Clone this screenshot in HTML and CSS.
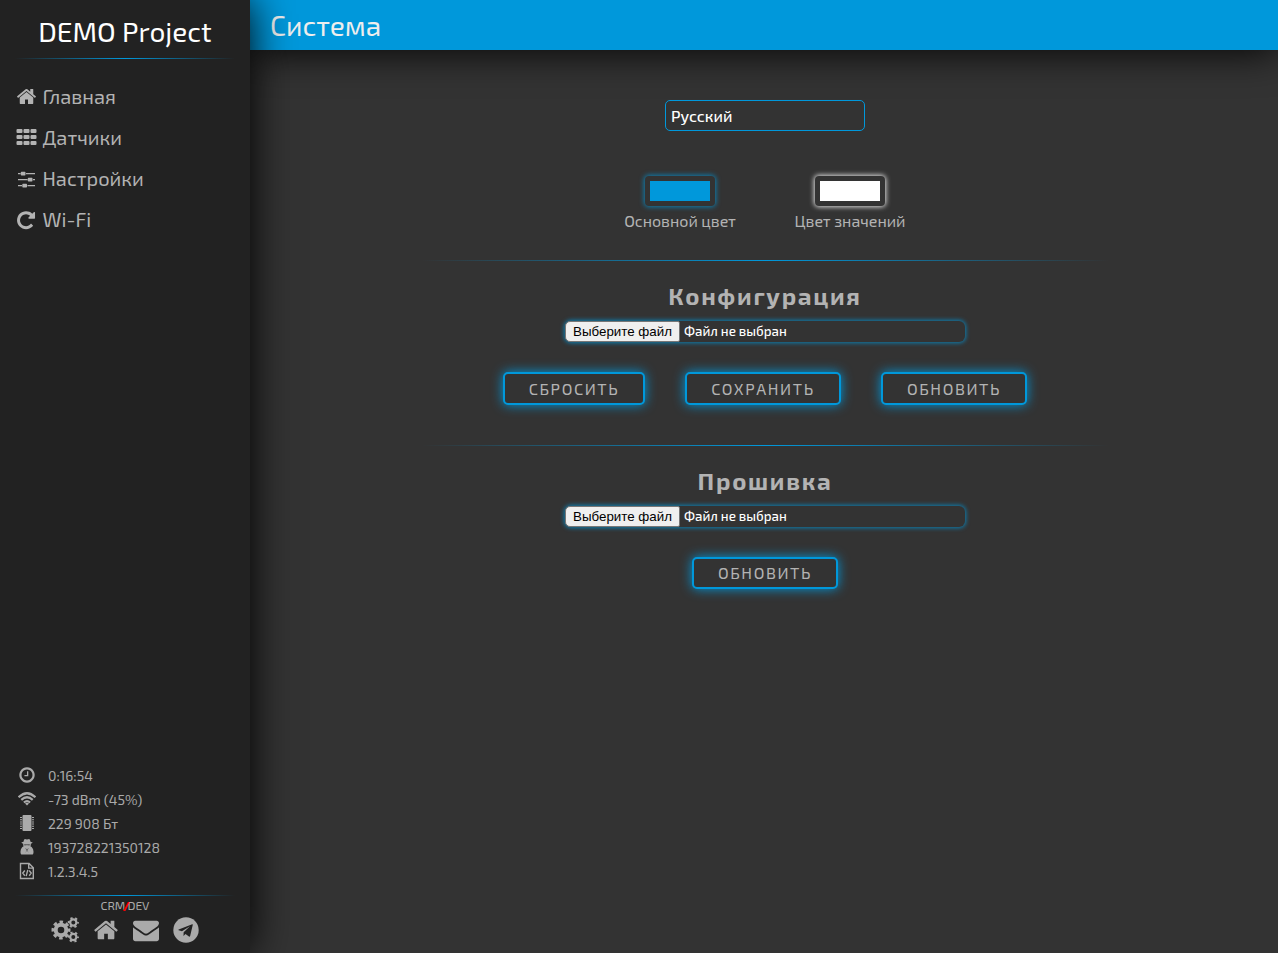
FILE: index.html
```html
<!DOCTYPE html>
<html lang="ru">
<head>
<meta charset="utf-8">
<title>DEMO Project</title>
<link rel="stylesheet" href="styles.css">
</head>
<body>
<svg class="defs" width="0" height="0">
  <symbol id="home" viewBox="0 0 1792 1792"><path d="M1472 992v480q0 26-19 45t-45 19h-384v-384h-256v384h-384q-26 0-45-19t-19-45v-480q0-1 .5-3t.5-3l575-474 575 474q1 2 1 6zm223-69l-62 74q-8 9-21 11h-3q-13 0-21-7l-692-577-692 577q-12 8-24 7-13-2-21-11l-62-74q-8-10-7-23.5t11-21.5l719-599q32-26 76-26t76 26l244 204v-195q0-14 9-23t23-9h192q14 0 23 9t9 23v408l219 182q10 8 11 21.5t-7 23.5z"/></symbol>
</svg>
<div class="app">
  <aside class="sidebar">
    <h1 class="brand">DEMO Project</h1>
    <div class="rule"></div>
    <nav class="nav">
      <a class="nav-item"><svg class="nav-icon" viewBox="0 0 1792 1792"><use href="#home"/></svg><span>Главная</span></a>
      <a class="nav-item"><svg class="nav-icon" viewBox="0 0 21 21"><path d="M1.500 2h4q1 0 1 1v2q0 1-1 1h-4q-1 0-1-1v-2q0-1 1-1zM8.500 2h4q1 0 1 1v2q0 1-1 1h-4q-1 0-1-1v-2q0-1 1-1zM15.500 2h4q1 0 1 1v2q0 1-1 1h-4q-1 0-1-1v-2q0-1 1-1zM1.500 8h4q1 0 1 1v2q0 1-1 1h-4q-1 0-1-1v-2q0-1 1-1zM8.500 8h4q1 0 1 1v2q0 1-1 1h-4q-1 0-1-1v-2q0-1 1-1zM15.500 8h4q1 0 1 1v2q0 1-1 1h-4q-1 0-1-1v-2q0-1 1-1zM1.500 14h4q1 0 1 1v2q0 1-1 1h-4q-1 0-1-1v-2q0-1 1-1zM8.500 14h4q1 0 1 1v2q0 1-1 1h-4q-1 0-1-1v-2q0-1 1-1zM15.500 14h4q1 0 1 1v2q0 1-1 1h-4q-1 0-1-1v-2q0-1 1-1z"/></svg><span>Датчики</span></a>
      <a class="nav-item"><svg class="nav-icon" viewBox="0 -1 21 21"><path d="M2 4h2.500v1.200H2zM10 4h9v1.200h-9zM2 10h9.500v1.200H2zM17 10h2v1.200h-2zM2 16h4v1.200H2zM11.500 16h7.500v1.200h-7.500zM5.500 2.700h3.300q.7 0 .7.700v2.400q0 .7-.7.700H5.500q-.7 0-.7-.7V3.400q0-.7.700-.7zM12.500 8.700h3.300q.7 0 .7.700v2.400q0 .7-.7.700h-3.300q-.7 0-.7-.7V9.400q0-.7.700-.7zM7 14.700h3.300q.7 0 .7.700v2.400q0 .7-.7.700H7q-.7 0-.7-.7v-2.400q0-.7.700-.7z"/></svg><span>Настройки</span></a>
      <a class="nav-item"><svg class="nav-icon" viewBox="40 -60 1792 1792"><path d="M1664 256v448q0 26-19 45t-45 19h-448q-42 0-59-40-17-39 14-69l138-138q-148-137-349-137-104 0-198.500 40.500t-163.500 109.500-109.500 163.500-40.500 198.500 40.500 198.500 109.500 163.500 163.500 109.500 198.500 40.500q119 0 225-52t179-147q7-10 23-12 15 0 25 9l137 138q9 8 9.500 20.500t-7.500 22.500q-109 132-264 204.500t-327 72.500q-156 0-298-61t-245-164-164-245-61-298 61-298 164-245 245-164 298-61q147 0 284.500 55.500t244.500 156.500l130-129q29-31 70-14 39 17 39 59z"/></svg><span>Wi-Fi</span></a>
    </nav>
    <div class="info">
      <div class="info-row"><svg class="info-icon" viewBox="0 0 1792 1792"><path d="M1024 544v448q0 14-9 23t-23 9h-320q-14 0-23-9t-9-23v-64q0-14 9-23t23-9h224v-352q0-14 9-23t23-9h64q14 0 23 9t9 23zm416 352q0-148-73-273t-198-198-273-73-273 73-198 198-73 273 73 273 198 198 273 73 273-73 198-198 73-273zm224 0q0 209-103 385.500t-279.500 279.500-385.500 103-385.500-103-279.500-279.500-103-385.500 103-385.500 279.500-279.500 385.500-103 385.500 103 279.500 279.500 103 385.500z"/></svg><span>0:16:54</span></div>
      <div class="info-row"><svg class="info-icon" viewBox="0 0 18 18"><g fill="none" stroke="currentColor" stroke-width="2.200"><path d="M.6 7.300Q9 -.8 17.400 7.300M3.300 9.900Q9 4.600 14.700 9.900M5.900 12.500Q9 9.800 12.100 12.500"/></g><path d="M7 13.400Q9 11.900 11 13.400L9 15.400z"/></svg><span>-73 dBm (45%)</span></div>
      <div class="info-row"><svg class="info-icon" viewBox="0 0 18 18"><path d="M5.500 1h7q1 0 1 1v14q0 1-1 1h-7q-1 0-1-1V2q0-1 1-1zM2 3h2v1H2zM2 5.200h2v1H2zM2 7.400h2v1H2zM2 9.600h2v1H2zM2 11.800h2v1H2zM2 14h2v1H2zM14 3h2v1h-2zM14 5.200h2v1h-2zM14 7.400h2v1h-2zM14 9.600h2v1h-2zM14 11.800h2v1h-2zM14 14h2v1h-2z"/></svg><span>229 908 Бт</span></div>
      <div class="info-row"><svg class="info-icon" viewBox="0 0 18 18"><path fill-rule="evenodd" d="M5.500 3.700Q5.900 1.300 6.900 1L9 1.500l2.100-.5q1 .3 1.400 2.700l2.200.8q-.6.900-1.900 1.200.2 1.600-.4 2.500 2.700 1.200 3.100 5.200.2 3.100-1.500 3.100H4q-1.700 0-1.500-3.100.4-4 3.100-5.200-.6-.9-.4-2.500Q3.900 5.400 3.300 4.500zM6.200 6.400v.8h2.200l.6-.4.6.4h2.200v-.8zM7.200 10.300l1 1.300-.4 3.500.8-3.300v-.9zM10.800 10.300l-1 1.300.4 3.500-.8-3.300v-.9z"/></svg><span>193728221350128</span></div>
      <div class="info-row"><svg class="info-icon" viewBox="0 0 18 18"><path d="M2.500 1.500h8.600l4.200 4.200v10.800H2.500zM10.700 1.500v4.600h4.600M6.800 8.500l-2 2.600 2 2.600M11.200 8.500l2 2.600-2 2.600M9.800 7.900l-1.600 6.300" fill="none" stroke="currentColor" stroke-width="1.400"/></svg><span>1.2.3.4.5</span></div>
    </div>
    <footer class="footer">
      <div class="rule"></div>
      <div class="credit"><span>CRM</span><b>/</b><span>DEV</span></div>
      <div class="links">
        <svg class="link-icon cogs" viewBox="0 0 28 28"><g fill="none" stroke="currentColor"><circle cx="10" cy="14" r="5.300" stroke-width="4"/><circle cx="10" cy="14" r="8" stroke-width="3" stroke-dasharray="3.500 2.783" stroke-dashoffset="1.750"/><g stroke-width="2.200"><circle cx="22.300" cy="6.500" r="3.100"/><circle cx="22.300" cy="21" r="3.100"/></g><g stroke-width="2.200" stroke-dasharray="2.100 2.612" stroke-dashoffset="1.050"><circle cx="22.300" cy="6.500" r="4.500"/><circle cx="22.300" cy="21" r="4.500"/></g></g></svg>
        <svg class="link-icon" viewBox="0 0 1792 1792"><use href="#home"/></svg>
        <svg class="link-icon mail" viewBox="0 0 1792 1792"><path d="M1792 710v794q0 66-47 113t-113 47h-1472q-66 0-113-47t-47-113v-794q44 49 101 87 362 246 497 345 57 42 92.500 65.500t94.500 48 110 24.500h2q51 0 110-24.500t94.500-48 92.500-65.500q170-123 498-345 57-39 100-87zm0-294q0 79-49 151t-122 123q-376 261-468 325-10 7-42.500 31t-54 38.500-52 32.500-57.500 27-50 9h-2q-23 0-50-9t-57.500-27-52-32.500-54-38.500-42.500-31q-91-64-262-182.500t-205-142.500q-62-42-117-115.500t-55-136.500q0-78 41.500-130t118.500-52h1472q65 0 112.500 47t47.500 113z"/></svg>
        <svg class="link-icon telegram" viewBox="0 0 26 26"><circle cx="13" cy="13" r="12.700"/><path class="plane" transform="translate(1.200 1.100) scale(.9)" d="M20 6.800L5 12.600q-1 .5 0 .9l3.600 1.200L17.500 9l-7 6.700-.2 4.200 2.300-2.100 3.800 2.700q1 .5 1.300-.7l2.900-12.200q.2-1.200-.6-.8z"/></svg>
      </div>
    </footer>
  </aside>
  <div class="page">
    <header class="header">Система</header>
    <main class="main">
      <div class="select">Русский</div>
      <div class="colors">
        <div class="color"><div class="swatch swatch-main"><i></i></div><span>Основной цвет</span></div>
        <div class="color"><div class="swatch swatch-value"><i></i></div><span>Цвет значений</span></div>
      </div>
      <section class="section">
        <h2>Конфигурация</h2>
        <div class="file"><button class="file-button">Выберите файл</button><span>Файл не выбран</span></div>
        <div class="buttons"><button class="btn b-reset">Сбросить</button><button class="btn b-save">Сохранить</button><button class="btn">Обновить</button></div>
      </section>
      <section class="section">
        <h2>Прошивка</h2>
        <div class="file"><button class="file-button">Выберите файл</button><span>Файл не выбран</span></div>
        <div class="buttons"><button class="btn b-flash">Обновить</button></div>
      </section>
    </main>
  </div>
</div>
</body>
</html>
```
FILE: styles.css
```css
* { box-sizing: border-box; }
:root { --accent: #0098db; --text: #b3b3b3; }
body { margin: 0; background: #333; color: var(--text); font-family: "Exo 2", Roboto, sans-serif; font-size: 16px; }
svg { display: block; fill: currentColor; flex: none; }
.defs { position: absolute; }
.app { display: flex; height: 953px; overflow: hidden; }
.sidebar { position: relative; z-index: 2; width: 250px; flex: none; background: #222; box-shadow: 0 0 40px #000; display: flex; flex-direction: column; }
.brand { margin: 0; height: 58px; padding-top: 5px; color: #fff; font-size: 28px; font-weight: 400; line-height: 52px; text-align: center; white-space: nowrap; }
.rule { height: 1px; margin: 0 15px; background: linear-gradient(90deg, transparent, var(--accent), transparent); }
.nav { padding: 17px 16px 0; }
.nav-item { display: flex; align-items: center; gap: 5.5px; height: 41px; font-size: 20px; white-space: nowrap; }
.nav-item span { padding-bottom: 2px; }
.nav-icon { width: 21px; height: 21px; }
.info { margin-top: auto; padding-left: 18px; height: 132px; color: #aaa; }
.info-row { display: flex; align-items: center; gap: 12px; height: 24px; font-size: 14px; white-space: nowrap; }
.info-icon { width: 18px; height: 18px; }
.footer { height: 58px; color: #aaa; }
.credit { height: 20px; line-height: 19px; font-size: 12px; text-align: center; }
.credit b { color: red; margin: 0 -2.5px; font-weight: 900; position: relative; }
.links { display: flex; justify-content: center; gap: 14px; padding: 1px 1px 0 0; }
.link-icon { width: 26px; height: 26px; }
.cogs { width: 28px; height: 28px; margin-top: -1px; }
.plane { fill: #222; }
.page { flex: 1; min-width: 0; }
.header { height: 50px; padding-left: 20px; background: var(--accent); box-shadow: 0 0 40px #000; color: #eee; font-size: 28px; line-height: 51px; }
.main { display: flex; flex-direction: column; align-items: center; padding: 50px 0 0 2px; }
.select { width: 200px; height: 31px; border: 1px solid var(--accent); border-radius: 5px; padding-left: 5px; color: #fff; font-weight: 500; line-height: 29px; }
.colors { display: flex; gap: 30px; margin-top: 45px; height: 84px; }
.color { width: 140px; display: flex; flex-direction: column; align-items: center; line-height: 29px; white-space: nowrap; }
.swatch { width: 70px; height: 30px; border-radius: 4px; padding: 5px; }
.swatch i { display: block; height: 20px; background: currentColor; }
.swatch-main { color: var(--accent); box-shadow: 0 0 5px 1px rgb(0 152 219 / 75%); background: #333; }
.swatch-value { color: #fff; box-shadow: 0 0 5px 1px rgb(255 255 255 / 85%); background: #333; }
.section { width: 685px; height: 185px; display: flex; flex-direction: column; align-items: center; border-top: 1px solid; border-image: linear-gradient(90deg, transparent, var(--accent), transparent) 1; }
h2 { margin: 18px 0 8px; height: 34px; line-height: 34px; font-size: 24px; font-weight: 700; letter-spacing: 1.7px; }
.file { width: 400px; height: 21px; border-radius: 6px; box-shadow: 0 0 4px 1px rgb(0 152 219 / 75%); background: #333; display: flex; align-items: center; gap: 4px; color: #fff; font-size: 13.333px; font-weight: 500; }
.file span { padding-bottom: 2px; }
.file-button { width: 115px; height: 21px; padding: 0; border: 1px solid #767676; border-radius: 5px 2px 2px 5px; background: #efefef; color: #000; font: 13.333px "Liberation Sans", sans-serif; white-space: nowrap; }
.buttons { display: flex; gap: 40px; margin-top: 30px; }
.btn { width: 146px; height: 33px; padding: 0; border: 2px solid var(--accent); border-radius: 5px; box-shadow: 0 0 12px var(--accent); background: #333; color: var(--text); font: 16px "Exo 2", Roboto, sans-serif; letter-spacing: 1.6px; text-transform: uppercase; }
.b-reset { width: 142px; }
.b-save { width: 156px; }
.b-flash { height: 32px; padding-bottom: 2px; }
```
